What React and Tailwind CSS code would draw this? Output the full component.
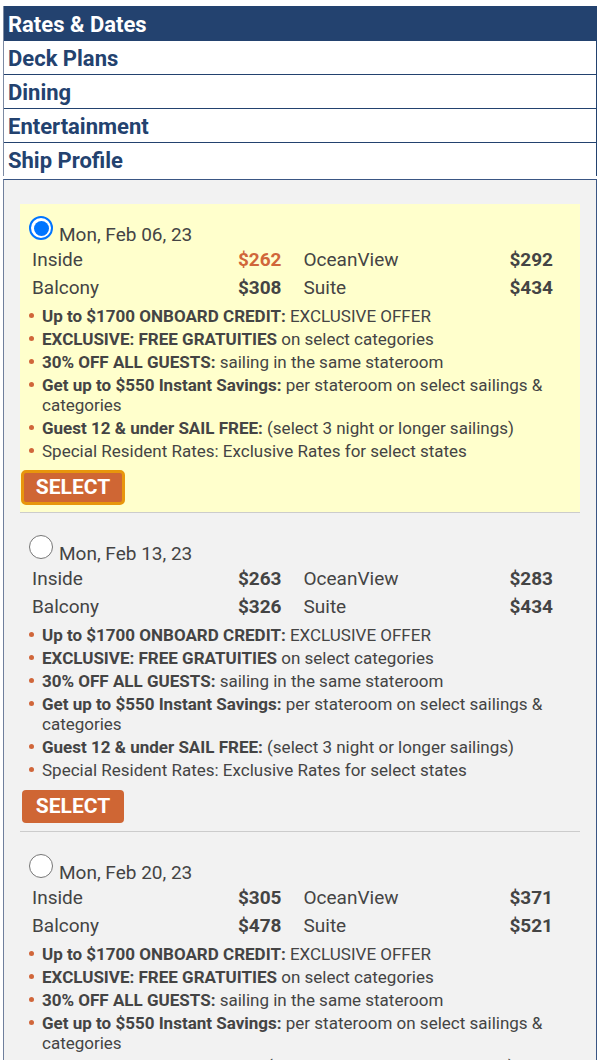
import React from "react";

const font = { fontFamily: "Roboto, 'Noto Sans', Arial, sans-serif" };

const perks = [
  { b: "Up to $1700 ONBOARD CREDIT:", t: " EXCLUSIVE OFFER" },
  { b: "EXCLUSIVE: FREE GRATUITIES", t: " on select categories" },
  { b: "30% OFF ALL GUESTS:", t: " sailing in the same stateroom" },
  { b: "Get up to $550 Instant Savings:", t: " per stateroom on select sailings & categories" },
  { b: "Guest 12 & under SAIL FREE:", t: " (select 3 night or longer sailings)" },
  { b: "", t: "Special Resident Rates: Exclusive Rates for select states" },
];

const sailings = [
  { date: "Mon, Feb 06, 23", inside: "$262", ocean: "$292", balcony: "$308", suite: "$434", selected: true, cheap: "inside" },
  { date: "Mon, Feb 13, 23", inside: "$263", ocean: "$283", balcony: "$326", suite: "$434" },
  { date: "Mon, Feb 20, 23", inside: "$305", ocean: "$371", balcony: "$478", suite: "$521" },
];

function Radio({ on }) {
  return on ? (
    <span className="shrink-0 w-6 h-6 rounded-full border-2 border-[#0075ff] bg-white flex items-center justify-center">
      <span className="w-[15px] h-[15px] rounded-full bg-[#0075ff]" />
    </span>
  ) : (
    <span className="shrink-0 w-6 h-6 rounded-full border-[1.5px] border-[#767676] bg-white" />
  );
}

function Price({ label, value, hot }) {
  return (
    <div className="flex justify-between">
      <span>{label}</span>
      <span className={hot ? "font-bold text-[#d0663a]" : "font-bold"}>{value}</span>
    </div>
  );
}

function Card({ s }) {
  return (
    <div
      className={
        "mt-[10px] pt-3 pb-[8px] border-b border-[#cccccc] " +
        (s.selected ? "bg-[#ffffcc]" : "")
      }
    >
      <div className="flex items-start pl-[9px] h-[30px]">
        <Radio on={s.selected} />
        <span className="ml-[6px] mt-[9px] text-[19px] leading-[20px]">{s.date}</span>
      </div>
      <div className="grid grid-cols-2 gap-x-[22px] pl-3 pr-[27px] text-[19px] leading-[28px]">
        <Price label="Inside" value={s.inside} hot={s.cheap === "inside"} />
        <Price label="OceanView" value={s.ocean} />
        <Price label="Balcony" value={s.balcony} />
        <Price label="Suite" value={s.suite} />
      </div>
      <ul className="mt-[4px] pl-[9px] pr-[20px] text-[17px] leading-[20px]">
        {perks.map((p, i) => (
          <li key={i} className="flex mb-[3px]">
            <span className="shrink-0 mt-[7px] w-[5px] h-[5px] rounded-full bg-[#d0663a] mr-[8px]" />
            <span>
              {p.b && <b className="font-bold">{p.b}</b>}
              {p.t}
            </span>
          </li>
        ))}
      </ul>
      <div className="mt-[10px] pl-[2px]">
        <button
          className={
            "h-[33px] w-[102px] rounded-[4px] bg-[#cf6634] text-white font-bold text-[21px] leading-none " +
            (s.selected ? "outline-3 outline-[#e8960c] -outline-offset-2" : "")
          }
        >
          SELECT
        </button>
      </div>
    </div>
  );
}

export default function App() {
  const nav = ["Deck Plans", "Dining", "Entertainment"];
  return (
    <div style={font} className="bg-white w-[600px] min-h-[1060px] pt-[6px] px-[3px] text-[#444]">
      <div className="border-l border-[#7c8aa3] border-r border-r-[#23426f]">
        <div className="h-[35px] bg-[#23426f] text-white font-bold text-[22px] flex items-center pl-[4px] pt-[1px]">
          Rates &amp; Dates
        </div>
        {nav.map((n) => (
          <div
            key={n}
            className="h-[34px] border-b border-[#23426f] text-[#23426f] font-bold text-[22px] flex items-center pl-[4px] pt-[1px]"
          >
            {n}
          </div>
        ))}
        <div className="h-[33px] text-[#23426f] font-bold text-[22px] flex items-center pl-[4px] pt-[1px]">
          Ship Profile
        </div>
      </div>
      <div className="mt-[3px] bg-[#f2f2f2] border border-[#3a5684] border-l-[#6f7f9c] pt-[14px] px-4 pb-6">
        {sailings.map((s, i) => (
          <Card key={i} s={s} />
        ))}
      </div>
    </div>
  );
}
